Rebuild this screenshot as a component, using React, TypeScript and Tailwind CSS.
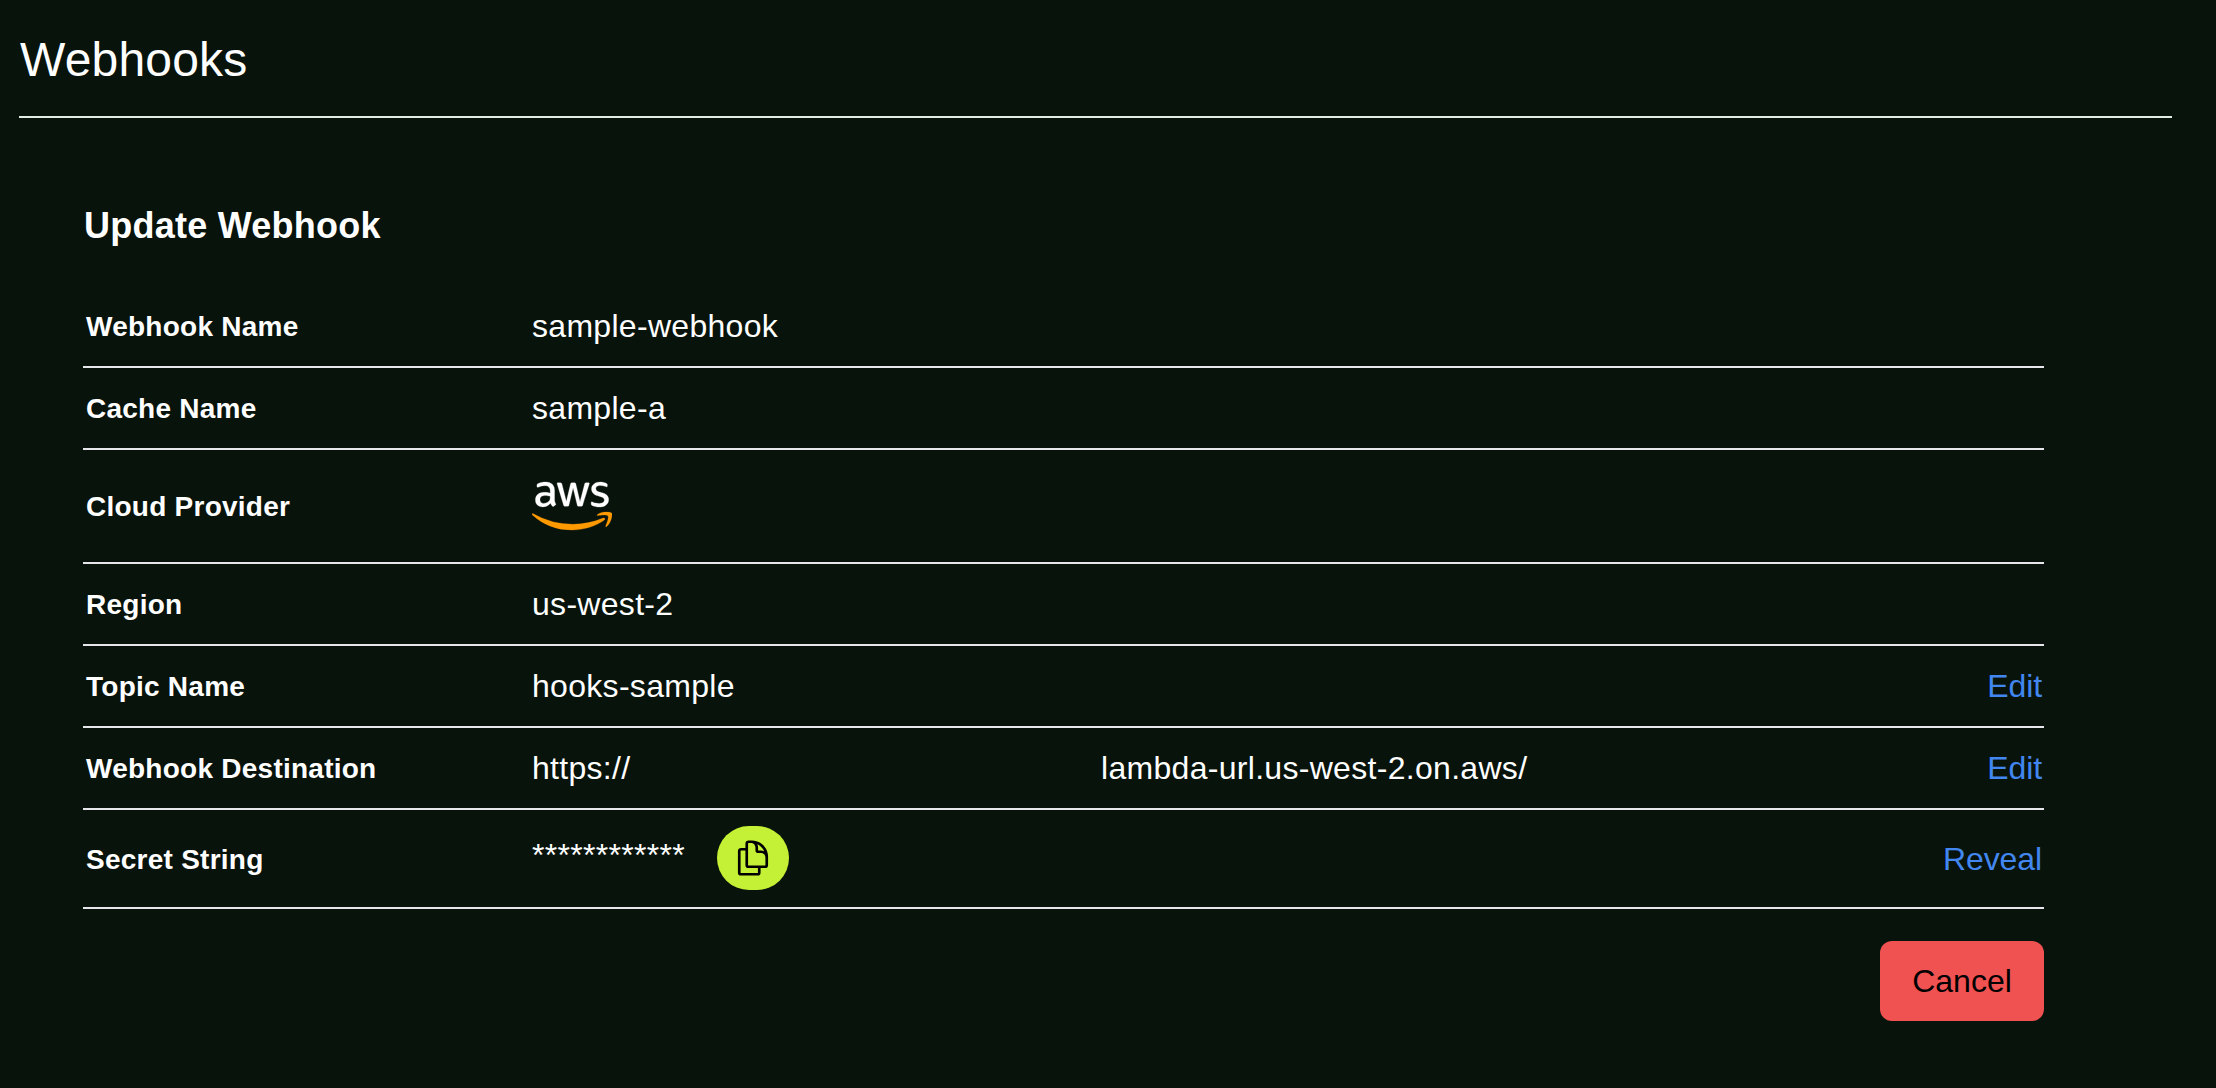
import type { ReactNode } from "react";
import { FaAws } from "react-icons/fa";
import { HiOutlineDocumentDuplicate } from "react-icons/hi2";

function AwsLogo() {
  return (
    <span className="flex h-[48px] w-[80px] items-center justify-center">
      <svg width="0" height="0" className="absolute" aria-hidden="true">
        <defs>
          <linearGradient id="aws-tone" x1="0" y1="0" x2="0" y2="1">
            <stop offset="0.57" stopColor="#ffffff" />
            <stop offset="0.57" stopColor="#ff9900" />
          </linearGradient>
        </defs>
      </svg>
      <FaAws className="h-[64px] w-[80px] shrink-0 fill-[url(#aws-tone)] stroke-[url(#aws-tone)] stroke-[2px]" />
    </span>
  );
}

function Row({
  label,
  height = "h-[82px]",
  action,
  children,
}: {
  label: string;
  height?: string;
  action?: string;
  children: ReactNode;
}) {
  return (
    <div className={`flex items-center border-b-2 border-[#e5e7eb] pr-[2px] pl-[3px] ${height}`}>
      <div className="w-[446px] shrink-0 pt-[2px] text-[28px] font-bold tracking-[0.25px]">
        {label}
      </div>
      <div className="flex flex-1 items-center text-[32px] tracking-[0.3px]">{children}</div>
      {action && <button className="text-[32px] tracking-[-0.1px] text-[#4287f0]">{action}</button>}
    </div>
  );
}

export default function App() {
  return (
    <main className="h-[1088px] w-full overflow-hidden bg-[#08130c] pr-[44px] pl-[19px] font-['Liberation_Sans',Arial,sans-serif] text-white">
      <header className="flex h-[118px] items-center border-b-2 border-[#e2ece5] pt-[4px] pl-px">
        <h1 className="text-[48px] leading-[60px] tracking-[0.2px]">Webhooks</h1>
      </header>
      <section className="pt-[84px] pr-[128px] pl-[64px]">
        <h2 className="h-[84px] pl-px text-[36px] leading-[48px] font-bold tracking-[0.25px]">
          Update Webhook
        </h2>
        <Row label="Webhook Name">sample-webhook</Row>
        <Row label="Cache Name">sample-a</Row>
        <Row label="Cloud Provider" height="h-[114px]">
          <AwsLogo />
        </Row>
        <Row label="Region">us-west-2</Row>
        <Row label="Topic Name" action="Edit">
          hooks-sample
        </Row>
        <Row label="Webhook Destination" action="Edit">
          <span className="w-[569px]">https://</span>
          <span>lambda-url.us-west-2.on.aws/</span>
        </Row>
        <Row label="Secret String" height="h-[99px]" action="Reveal">
          <span className="w-[185px] pb-[7px]">************</span>
          <button className="mb-px flex h-[64px] w-[72px] items-center justify-center rounded-full bg-[#c4f135] text-black">
            <HiOutlineDocumentDuplicate className="size-[40px] stroke-[1.6px]" />
          </button>
        </Row>
        <div className="flex justify-end pt-[32px]">
          <button className="h-[80px] w-[164px] rounded-[12px] bg-[#f05252] text-[32px] text-black">
            Cancel
          </button>
        </div>
      </section>
    </main>
  );
}
